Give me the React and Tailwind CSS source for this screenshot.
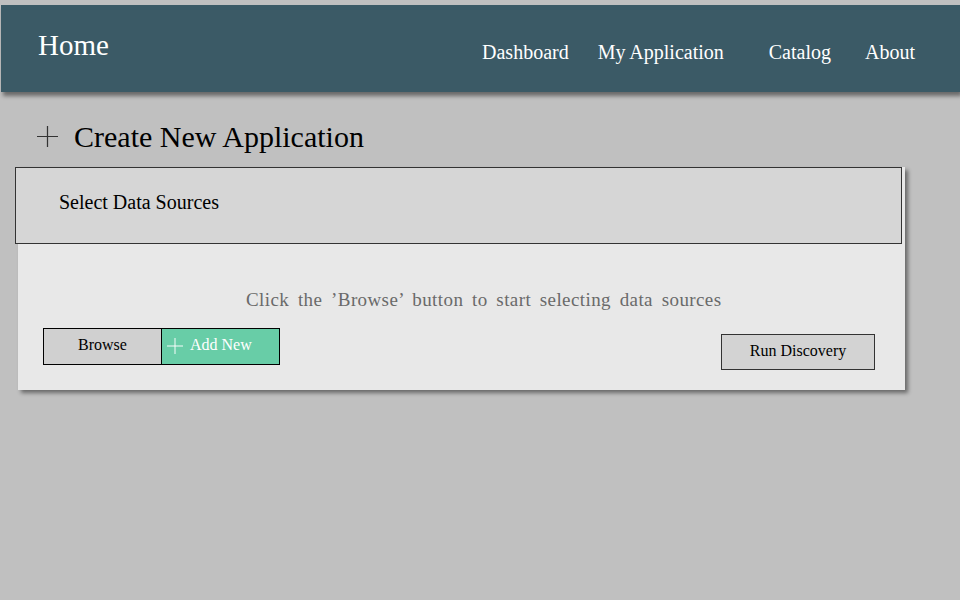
import React from 'react'

function PlusIcon({ className }) {
  return (
    <svg viewBox='0 0 22 22' className={className} fill='none' stroke='currentColor' strokeWidth='1.3'>
      <path d='M11 0 V22 M0 11 H22' />
    </svg>
  )
}

export default function App() {
  return (
    <div className='min-h-[600px] w-full bg-[#c0c0c0] pt-[5px] font-["Liberation_Serif",serif] overflow-hidden'>
      <div className='ml-px h-[87px] flex items-center justify-between bg-[#3b5a66] shadow-[2px_4px_4px_rgba(0,0,0,0.45)]'>
        <div className='ml-[37px] -mt-[5px] text-[29px] text-white'>Home</div>
        <div className='flex items-center text-[20px] text-white mr-[45px] mt-[6px]'>
          <span className='mr-[29px]'>Dashboard</span>
          <span className='mr-[45px]'>My Application</span>
          <span className='mr-[34px]'>Catalog</span>
          <span>About</span>
        </div>
      </div>

      <div className='flex items-center mt-[27px] ml-[37px] h-[35px]'>
        <PlusIcon className='w-[21px] h-[21px] text-[#333]' />
        <div className='ml-[16px] text-[30px] text-black leading-none'>Create New Application</div>
      </div>

      <div className='ml-[18px] mt-[13px] w-[887px] h-[223px] bg-[#e8e8e8] shadow-[3px_3px_4px_rgba(0,0,0,0.45)]'>
        <div className='-ml-[3px] w-[887px] h-[77px] bg-[#d6d6d6] border border-[#333] flex items-center pl-[43px] pb-[8px]'>
          <span className='text-[20px] text-black'>Select Data Sources</span>
        </div>
        <div className='pl-[228px] pt-[45px] text-[19px] text-[#6a6a6a] tracking-[0.4px] [word-spacing:3.6px] leading-[22px]'>
          Click the ’Browse’ button to start selecting data sources
        </div>
        <div className='flex items-start justify-between pl-[25px] pr-[30px] mt-[17px]'>
          <div className='flex text-[16px]'>
            <button className='w-[119px] h-[37px] bg-[#d0d0d0] border border-black text-black pb-[4px]'>Browse</button>
            <button className='-ml-px w-[119px] h-[37px] bg-[#68cda7] border border-black text-white flex items-center pl-[5px] pb-[4px]'>
              <PlusIcon className='w-[16px] h-[16px] text-white mr-[7px] mt-[3px]' />
              Add New
            </button>
          </div>
          <button className='mt-[6px] w-[154px] h-[36px] bg-[#d3d3d3] border border-[#333] text-[16px] text-black pb-[3px]'>Run Discovery</button>
        </div>
      </div>
    </div>
  )
}
